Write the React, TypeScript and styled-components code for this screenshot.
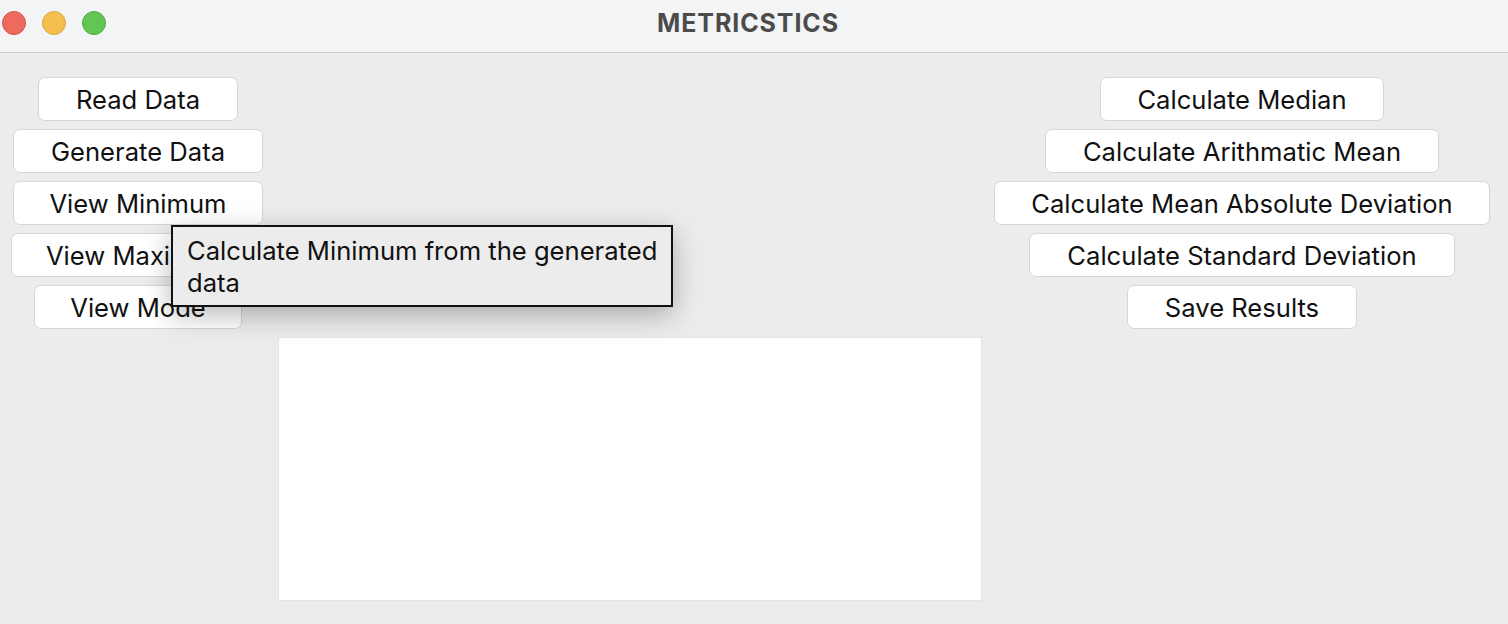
import { createGlobalStyle, styled } from "styled-components";

const GlobalStyle = createGlobalStyle`
  html, body {
    margin: 0;
    padding: 0;
    background: #ececec;
  }
  body {
    font-family: Inter, "Noto Sans", "Liberation Sans", sans-serif;
    width: 1508px;
    height: 624px;
    overflow: hidden;
  }
`;

const Window = styled.div`
  width: 1508px;
  height: 624px;
  background: #ececec;
  position: relative;
`;

const TitleBar = styled.div`
  height: 53px;
  box-sizing: border-box;
  padding-bottom: 6px;
  background: #f3f4f6;
  border-bottom: 1px solid #cdcdcd;
  display: flex;
  align-items: center;
  position: relative;
`;

const Lights = styled.div`
  display: flex;
  gap: 16px;
  padding-left: 2px;
  position: absolute;
  left: 0;
  top: 11px;
`;

const Light = styled.span<{ $fill: string; $edge: string }>`
  width: 24px;
  height: 24px;
  border-radius: 50%;
  box-sizing: border-box;
  background: ${(p) => p.$fill};
  border: 1px solid ${(p) => p.$edge};
`;

const Title = styled.div`
  flex: 1;
  text-align: center;
  font-size: 25px;
  font-weight: 700;
  letter-spacing: 0.9px;
  color: #4b4b4b;
  padding-right: 12px;
`;

const Body = styled.div`
  display: grid;
  grid-template-columns: 276px 704px 516px;
  column-gap: 2px;
  row-gap: 8px;
  padding-top: 24px;
`;

const ButtonStack = styled.div<{ $col: number }>`
  grid-column: ${(p) => p.$col};
  grid-row: 1;
  display: flex;
  flex-direction: column;
  align-items: center;
  gap: 8px;
`;

const Button = styled.button<{ $w: number }>`
  width: ${(p) => p.$w}px;
  height: 44px;
  box-sizing: border-box;
  background: #ffffff;
  border: 1px solid #d6d6d6;
  border-radius: 7px;
  font-family: inherit;
  font-size: 25.6px;
  color: #111;
  padding: 0;
  display: flex;
  align-items: center;
  justify-content: center;
  white-space: nowrap;
`;

const Canvas = styled.div`
  grid-column: 2;
  grid-row: 2;
  height: 264px;
  background: #ffffff;
  box-shadow: inset 0 0 0 1px #e4e4e4;
`;

const Tooltip = styled.div`
  position: absolute;
  left: 171px;
  top: 225px;
  width: 502px;
  height: 82px;
  box-sizing: border-box;
  background: #ececec;
  border: 2px solid #111;
  padding: 8px 14px;
  font-size: 25.6px;
  line-height: 32px;
  color: #111;
  white-space: nowrap;
  box-shadow: 0 8px 26px rgba(0, 0, 0, 0.28);
`;

const leftButtons = [
  { label: "Read Data", w: 200 },
  { label: "Generate Data", w: 250 },
  { label: "View Minimum", w: 250 },
  { label: "View Maximum", w: 254 },
  { label: "View Mode", w: 208 },
];

const rightButtons = [
  { label: "Calculate Median", w: 284 },
  { label: "Calculate Arithmatic Mean", w: 394 },
  { label: "Calculate Mean Absolute Deviation", w: 496 },
  { label: "Calculate Standard Deviation", w: 426 },
  { label: "Save Results", w: 230 },
];

export default function App() {
  return (
    <Window>
      <GlobalStyle />
      <TitleBar>
        <Lights>
          <Light $fill="#ee6a5f" $edge="#d5534a" />
          <Light $fill="#f6be4f" $edge="#dca43a" />
          <Light $fill="#62c554" $edge="#4fac43" />
        </Lights>
        <Title>METRICSTICS</Title>
      </TitleBar>
      <Body>
        <ButtonStack $col={1}>
          {leftButtons.map((b) => (
            <Button key={b.label} $w={b.w}>
              {b.label}
            </Button>
          ))}
        </ButtonStack>
        <ButtonStack $col={3}>
          {rightButtons.map((b) => (
            <Button key={b.label} $w={b.w}>
              {b.label}
            </Button>
          ))}
        </ButtonStack>
        <Canvas />
      </Body>
      <Tooltip>
        Calculate Minimum from the generated
        <br />
        data
      </Tooltip>
    </Window>
  );
}
